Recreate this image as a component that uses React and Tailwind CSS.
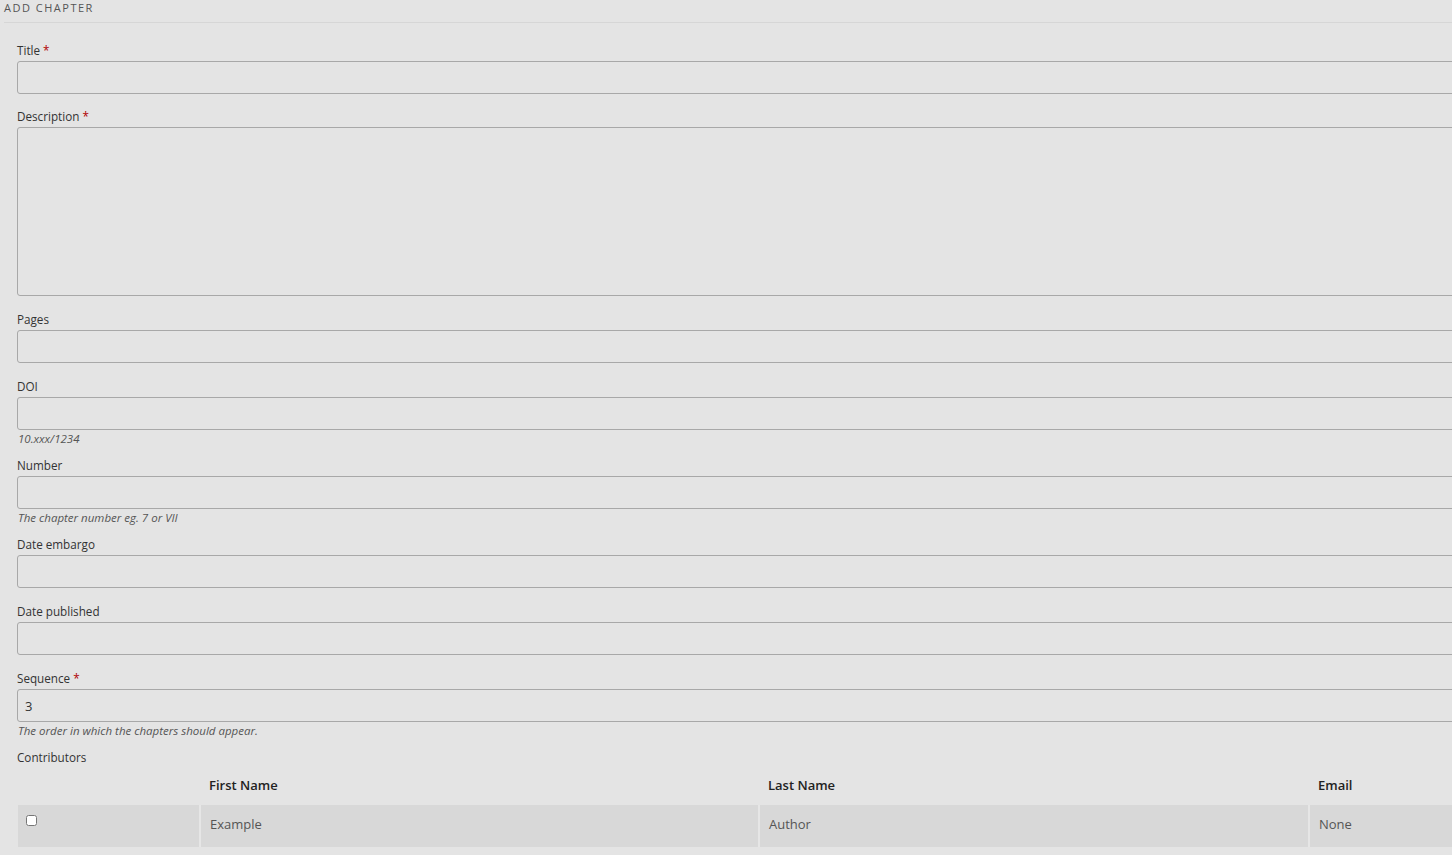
import React from 'react';

const fields = [
  { label: 'Title', required: true, gap: 'mb-[14px]' },
  { label: 'Description', required: true, textarea: true },
  { label: 'Pages' },
  { label: 'DOI', help: '10.xxx/1234' },
  { label: 'Number', help: 'The chapter number eg. 7 or VII' },
  { label: 'Date embargo' },
  { label: 'Date published' },
  { label: 'Sequence', required: true, value: '3', help: 'The order in which the chapters should appear.' },
];

function Field({ label, required, textarea, value, help, gap }) {
  return (
    <div className={gap || (help ? 'mb-[11px]' : 'mb-[15px]')}>
      <label className="block text-[11.7px] leading-[16px] text-[#333] mb-[3px]">
        {label}
        {required && <span className="text-[#b00000]"> *</span>}
      </label>
      {textarea ? (
        <textarea
          className="block w-full h-[169px] rounded-[3px] border border-[#a8a8a8] bg-transparent resize-none outline-none"
        />
      ) : (
        <input
          type="text"
          defaultValue={value}
          className="block w-full h-[33px] rounded-[3px] border border-[#a8a8a8] bg-transparent px-[7px] text-[13px] text-[#333] outline-none"
        />
      )}
      {help && <p className="mt-[2px] pl-[1px] text-[11.5px] leading-[14px] italic text-[#555]">{help}</p>}
    </div>
  );
}

export default function App() {
  return (
    <div
      className="w-[1452px] h-[855px] overflow-hidden bg-[#e4e4e4]"
      style={{ fontFamily: '"Open Sans", "Liberation Sans", sans-serif' }}
    >
      <div className="pl-[4px]">
        <h2 className="text-[11px] leading-[15px] tracking-[1.5px] uppercase text-[#555] pb-[7px] border-b border-[#d6d6d6]">
          Add Chapter
        </h2>
      </div>

      <form className="w-[1520px] pl-[17px] pt-[19px]">
        {fields.map((f) => (
          <Field key={f.label} {...f} />
        ))}

        <div className="text-[11.7px] leading-[16px] text-[#333]">Contributors</div>

        <table className="table-fixed w-[1591px] ml-[1px] mt-[2px] border-collapse text-[13px]">
          <thead>
            <tr className="h-[38px]">
              <th className="w-[182px]"></th>
              <th className="w-[559px] text-left font-semibold text-[#222] px-[9px] align-middle">First Name</th>
              <th className="w-[550px] text-left font-semibold text-[#222] px-[9px] align-middle">Last Name</th>
              <th className="w-[300px] text-left font-semibold text-[#222] px-[9px] align-middle">Email</th>
            </tr>
          </thead>
          <tbody>
            <tr className="h-[42px] bg-[#d8d8d8]">
              <td className="align-top pl-[8px] pt-[10px] border-r-2 border-[#e6e6e6]">
                <input type="checkbox" className="m-0 block w-[11px] h-[11px]" />
              </td>
              <td className="px-[9px] pb-[2px] text-[#555] border-r-2 border-[#e6e6e6]">Example</td>
              <td className="px-[9px] pb-[2px] text-[#555] border-r-2 border-[#e6e6e6]">Author</td>
              <td className="px-[9px] pb-[2px] text-[#555]">None</td>
            </tr>
          </tbody>
        </table>
      </form>
    </div>
  );
}
